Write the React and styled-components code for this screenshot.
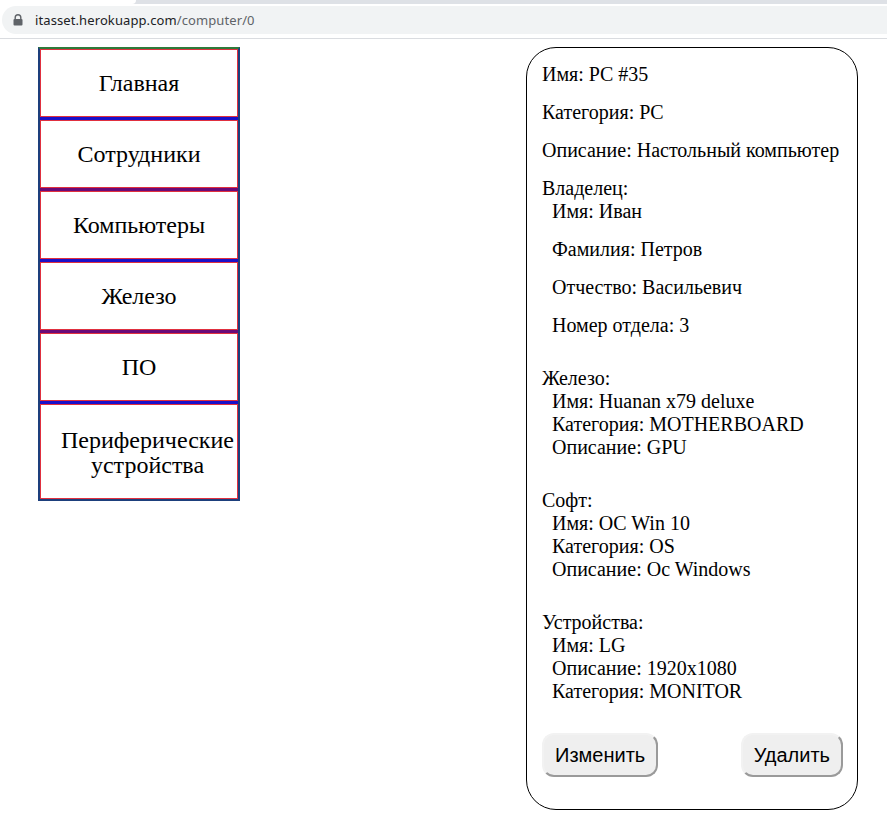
import React from "react";
import styled, { createGlobalStyle } from "styled-components";

const Global = createGlobalStyle`
  html, body { margin: 0; padding: 0; background: #fff; }
  body { font-family: "Liberation Serif", "Times New Roman", serif; color: #000; }
`;

const Chrome = styled.div`
  height: 39px;
  background: #fff;
  border-bottom: 1px solid #dadce0;
  box-sizing: border-box;
  display: flex;
  flex-direction: column;
`;

const TabStrip = styled.div`
  height: 4px;
  background: #dee1e6;
  display: flex;
`;

const ActiveTabEdge = styled.div`
  width: 136px;
  background: #fff;
  border-bottom-right-radius: 4px;
`;

const Omnibox = styled.div`
  margin: 2px 0 0 2px;
  height: 28px;
  border-radius: 14px 0 0 14px;
  background: #f1f3f4;
  display: flex;
  align-items: center;
  padding-left: 11px;
  gap: 12px;
  font-family: "Noto Sans", Roboto, Arial, sans-serif;
  font-size: 13px;
  letter-spacing: 0.1px;
`;

const Host = styled.span`
  color: #202124;
`;
const PathPart = styled.span`
  color: #5f6368;
`;

const Page = styled.div`
  display: flex;
  align-items: flex-start;
  padding: 8px 29px 0 38px;
`;

const Nav = styled.nav`
  width: 198px;
  border: 2px solid #1d3f7c;
  border-top-color: #2f7a3a;
  display: flex;
  flex-direction: column;
  background: #fff;
`;

const NavItem = styled.div`
  height: ${(p) => (p.$tall ? "95px" : "68px")};
  box-sizing: border-box;
  border: 1px solid #e0303f;
  display: flex;
  align-items: center;
  justify-content: center;
  text-align: center;
  font-size: 24px;
  padding: ${(p) => (p.$tall ? "2px 0 0 17px" : "0")};
  line-height: 25px;
`;

const Separator = styled.div`
  height: 3px;
  background: ${(p) => (p.$tone === "blue" ? "#1a10c8" : "#6a0a78")};
`;

const Card = styled.section`
  margin-left: auto;
  width: 332px;
  box-sizing: border-box;
  border: 1px solid #000;
  border-radius: 30px;
  padding: 15px 14px 32px 15px;
  font-size: 20px;
  line-height: 23px;
`;

const Field = styled.p`
  margin: 0 0 15px;
  padding-left: ${(p) => (p.$indent ? "10px" : "0")};
`;

const Section = styled.div`
  margin-top: ${(p) => (p.$first ? "0" : "30px")};
`;

const Line = styled.div`
  padding-left: ${(p) => (p.$indent ? "10px" : "0")};
`;

const Buttons = styled.div`
  margin-top: 30px;
  display: flex;
  justify-content: space-between;
`;

const Button = styled.button`
  height: 44px;
  padding: 0 11px;
  font-family: "Liberation Sans", Arial, sans-serif;
  font-size: 20px;
  color: #000;
  background: #efefef;
  border: 2px solid;
  border-color: #f2f2f2 #9a9a9a #9a9a9a #f2f2f2;
  border-radius: 12px;
  cursor: pointer;
`;

const LockIcon = () => (
  <svg width="10" height="12" viewBox="0 0 10 12" aria-hidden="true">
    <path d="M2.2 5V3.6a2.8 2.8 0 0 1 5.6 0V5" fill="none" stroke="#5f6368" strokeWidth="1.4" />
    <rect x="0.5" y="5" width="9" height="6.5" rx="1" fill="#5f6368" />
  </svg>
);

const navItems = ["Главная", "Сотрудники", "Компьютеры", "Железо", "ПО"];

export default function App() {
  return (
    <>
      <Global />
      <Chrome>
        <TabStrip>
          <ActiveTabEdge />
        </TabStrip>
        <Omnibox>
          <LockIcon />
          <span>
            <Host>itasset.herokuapp.com</Host>
            <PathPart>/computer/0</PathPart>
          </span>
        </Omnibox>
      </Chrome>
      <Page>
        <Nav>
          {navItems.map((t, i) => (
            <React.Fragment key={t}>
              <NavItem>{t}</NavItem>
              <Separator $tone={i % 2 === 0 ? "blue" : "purple"} />
            </React.Fragment>
          ))}
          <NavItem $tall>Периферические устройства</NavItem>
        </Nav>
        <Card>
          <Field>Имя: PC #35</Field>
          <Field>Категория: PC</Field>
          <Field>Описание: Настольный компьютер</Field>
          <Section $first>
            <Line>Владелец:</Line>
            <Field $indent>Имя: Иван</Field>
            <Field $indent>Фамилия: Петров</Field>
            <Field $indent>Отчество: Васильевич</Field>
            <Field $indent>Номер отдела: 3</Field>
          </Section>
          <Section>
            <Line>Железо:</Line>
            <Line $indent>Имя: Huanan x79 deluxe</Line>
            <Line $indent>Категория: MOTHERBOARD</Line>
            <Line $indent>Описание: GPU</Line>
          </Section>
          <Section>
            <Line>Софт:</Line>
            <Line $indent>Имя: OC Win 10</Line>
            <Line $indent>Категория: OS</Line>
            <Line $indent>Описание: Oc Windows</Line>
          </Section>
          <Section>
            <Line>Устройства:</Line>
            <Line $indent>Имя: LG</Line>
            <Line $indent>Описание: 1920x1080</Line>
            <Line $indent>Категория: MONITOR</Line>
          </Section>
          <Buttons>
            <Button>Изменить</Button>
            <Button>Удалить</Button>
          </Buttons>
        </Card>
      </Page>
    </>
  );
}
